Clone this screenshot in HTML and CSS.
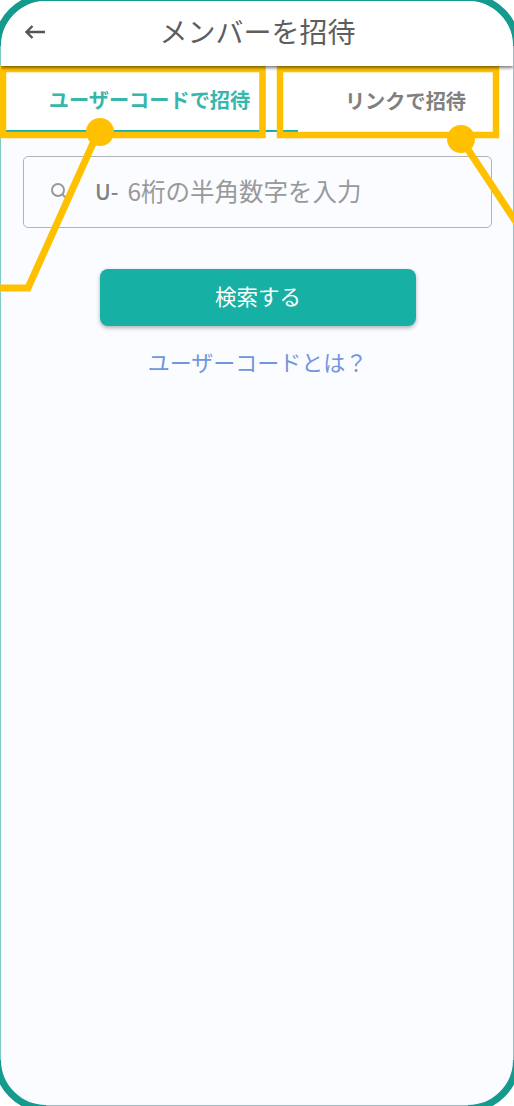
FILE: index.html
```html
<!DOCTYPE html>
<html lang="ja">
<head>
    <meta charset="UTF-8">
    <meta name="viewport" content="width=device-width, initial-scale=1.0">
    <title>メンバーを招待</title>
    <link rel="stylesheet" href="styles.css">
</head>
<body>

    <div class="phone">
        <!-- Header -->
        <div class="header">
            <svg class="back" width="24" height="24" viewBox="0 0 24 24">
                <path d="M23 12H4.5M10.5 6L4.5 12l6 6" fill="none" stroke="#555" stroke-width="2.4"/>
            </svg>
            <div class="title">メンバーを招待</div>
        </div>

        <!-- Tabs -->
        <div class="tabs">
            <div class="tab active">ユーザーコードで招待</div>
            <div class="tab">リンクで招待</div>
        </div>

        <!-- Search -->
        <div class="content">
            <div class="search-box">
                <svg class="search-icon" width="20" height="20" viewBox="0 0 20 20">
                    <circle cx="7" cy="8" r="6" fill="none" stroke="#999" stroke-width="2"/>
                    <path d="M11.5 12.5L15 16" stroke="#999" stroke-width="2"/>
                </svg>
                <span class="prefix">U-</span>
                <span class="placeholder">6桁の半角数字を入力</span>
            </div>
            <button class="search-btn">検索する</button>
            <a class="help-link" href="#">ユーザーコードとは？</a>
        </div>
    </div>

    <!-- Callouts drawn over the screen -->
    <svg class="callouts" width="514" height="1106" viewBox="0 0 514 1106">
        <!-- straight frame edges are paler than the corners -->
        <g fill="none" stroke="#7fcbc4" stroke-width="1">
            <path d="M0.5 46V1060M513.5 46V1060M46 1105.5H468"/>
        </g>
        <g fill="none" stroke="#ffc000" stroke-width="6.5">
            <rect x="3" y="69" width="259.5" height="66"/>
            <rect x="280" y="69" width="216" height="66"/>
            <path d="M99 130L28 288H0" stroke-width="7"/>
            <path d="M461 139L520 228" stroke-width="7"/>
        </g>
        <circle cx="100" cy="132" r="14" fill="#ffc000"/>
        <circle cx="461" cy="139" r="14" fill="#ffc000"/>
    </svg>

</body>
</html>
```

FILE: styles.css
```css
html, body {
    margin: 0;
    padding: 0;
    width: 514px;
    height: 1106px;
    overflow: hidden;
    background-color: #fff;
    font-family: "Noto Sans CJK JP", "Noto Sans", sans-serif;
}
.phone {
    box-sizing: border-box;
    width: 526px;
    height: 1118px;
    margin: -6px;
    border: 7px solid #159a8e;
    border-radius: 52px;
    background-color: #fafcff;
    overflow: hidden;
    display: flex;
    flex-direction: column;
}
.header {
    box-sizing: border-box;
    height: 65px;
    flex-shrink: 0;
    background-color: #fff;
    display: flex;
    align-items: center;
    justify-content: center;
    position: relative;
    box-shadow: 0 2px 3px rgba(0, 0, 0, 0.5);
    z-index: 1;
}
.back {
    position: absolute;
    left: 21px;
    top: 19px;
}
.title {
    font-size: 28px;
    color: #5e5e5e;
    margin-left: 1px;
    margin-top: -6px;
}
.tabs {
    display: flex;
    height: 66px;
    flex-shrink: 0;
    background-color: #fff;
}
.tab {
    box-sizing: border-box;
    flex: 1;
    display: flex;
    align-items: center;
    justify-content: center;
    font-size: 20.2px;
    font-weight: 700;
    color: #808080;
    padding-top: 2px;
}
.tab.active {
    flex: 0 0 297px;
    color: #37b6ab;
    border-bottom: 2.5px solid #16b0a5;
}
.content {
    display: flex;
    flex-direction: column;
    align-items: center;
    padding: 24px 21px 0 22px;
}
.search-box {
    box-sizing: border-box;
    width: 100%;
    height: 72px;
    border: 1.5px solid #b3b3b3;
    border-radius: 5px;
    display: flex;
    align-items: center;
    padding-left: 27px;
}
.search-icon {
    flex-shrink: 0;
    margin-right: 24px;
}
.prefix {
    font-size: 21.5px;
    font-weight: 500;
    color: #808080;
    margin-right: 9px;
    margin-bottom: 3px;
}
.placeholder {
    font-size: 24.5px;
    color: #999;
    margin-bottom: 3px;
}
.search-btn {
    width: 316px;
    height: 57px;
    margin-top: 41px;
    margin-left: 1px;
    padding-bottom: 5px;
    border: none;
    border-radius: 8px;
    background-color: #16b0a5;
    color: #fff;
    font-family: inherit;
    font-size: 21.5px;
    box-shadow: 0 2px 4px rgba(0, 0, 0, 0.3);
}
.help-link {
    margin-top: 19px;
    font-size: 22px;
    color: #7096e0;
    text-decoration: none;
}
.callouts {
    position: absolute;
    left: 0;
    top: 0;
}
```
